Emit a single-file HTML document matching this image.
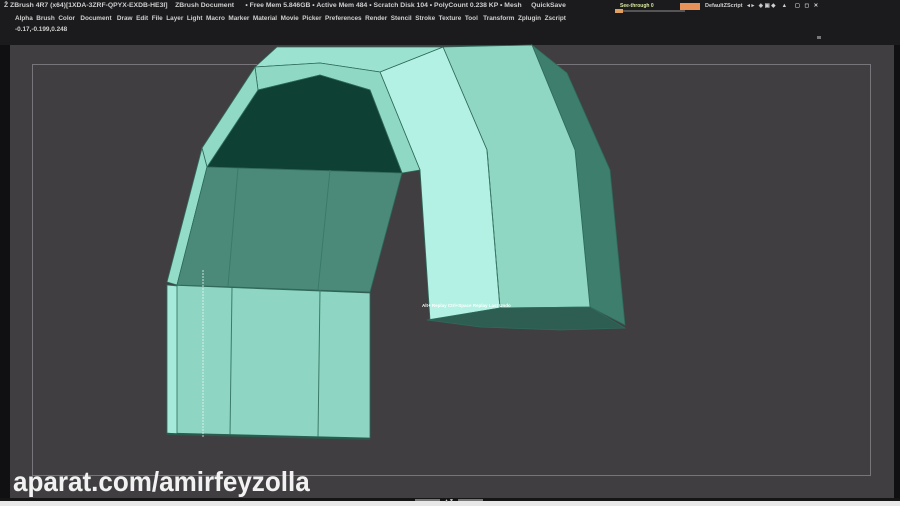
<!DOCTYPE html>
<html><head><meta charset="utf-8"><style>
html,body{margin:0;padding:0;width:900px;height:506px;overflow:hidden;background:#101012;font-family:"Liberation Sans",sans-serif}
.top{position:absolute;left:0;top:0;width:900px;height:45px;background:#1b1b1d}
.t{position:absolute;color:#cfcfcf;font-size:6.4px;white-space:nowrap;font-weight:bold}
.vp{position:absolute;left:10px;top:45px;width:884px;height:454px;background:#403e41}
.wm{position:absolute;left:13px;top:466px;color:#f2f2f2;font-size:28px;font-weight:bold;transform:scaleX(0.93);transform-origin:left}
</style></head><body>
<div class="top">
<div class="t" style="left:4px;top:2px;font-size:6.8px">Ẑ ZBrush 4R7 (x64)[1XDA-3ZRF-QPYX-EXDB-HE3I] &nbsp;&nbsp; ZBrush Document &nbsp;&nbsp;&nbsp;&nbsp; • Free Mem 5.846GB • Active Mem 484 • Scratch Disk 104 • PolyCount 0.238 KP • Mesh &nbsp;&nbsp;&nbsp; QuickSave</div>
<div style="position:absolute;left:620px;top:3px;width:50px;height:6px;color:#d8e8a0;font-size:5px;font-weight:bold">See-through 0</div>
<div style="position:absolute;left:615px;top:10px;width:70px;height:2px;background:#555"></div>
<div style="position:absolute;left:615px;top:9px;width:8px;height:4px;background:#e0a060"></div>
<div style="position:absolute;left:680px;top:3px;width:20px;height:7px;background:#e8925a"></div>
<div class="t" style="left:705px;top:3px;font-size:5.5px">DefaultZScript &nbsp; ◂ ▸ &nbsp; ◈ ▣ ◆ &nbsp;&nbsp; ▲ &nbsp;&nbsp;&nbsp; ▢ &nbsp; ◻ &nbsp; ✕</div>
<div class="t" style="left:15px;top:15px">Alpha &nbsp;Brush &nbsp;Color &nbsp;&nbsp;Document &nbsp;&nbsp;Draw &nbsp;Edit &nbsp;File &nbsp;Layer &nbsp;Light &nbsp;Macro &nbsp;Marker &nbsp;Material &nbsp;Movie &nbsp;Picker &nbsp;Preferences &nbsp;Render &nbsp;Stencil &nbsp;Stroke &nbsp;Texture &nbsp;Tool &nbsp;&nbsp;Transform &nbsp;Zplugin &nbsp;Zscript</div>
<div class="t" style="left:15px;top:26px">-0.17,-0.199,0.248</div>
<div style="position:absolute;left:817px;top:36px;width:4px;height:3px;background:#777"></div>
</div>
<div class="vp"></div>
<svg style="position:absolute;left:0;top:0" width="900" height="506">
<rect x="32.5" y="64.5" width="838" height="411" fill="none" stroke="#77757a" stroke-width="1"/>
<g stroke="#2f6a5a" stroke-width="0.8">
<polygon points="532,45 567,73 610,170 625,325 590,307 575,150" fill="#3e7e6c"/>
<polygon points="443,47 532,45 575,150 590,307 500,308 487,150" fill="#8fd7c3"/>
<polygon points="380,72 443,47 487,150 500,308 430,320 420,170" fill="#b2f1e3"/>
<polygon points="427,320 500,308 590,307 625,328 560,330 480,327" fill="#2d5e51"/>
<polygon points="255,67 277,47 443,47 380,72 320,63" fill="#9be3d0"/>
<polygon points="255,67 320,63 380,72 420,170 402,173 370,90 320,75 258,90" fill="#8fd8c4"/>
<polygon points="207,167 258,90 320,75 370,90 402,173" fill="#0f4034"/>
<polygon points="202,148 255,67 258,90 207,167" fill="#8fd9c5"/>
<polygon points="167,282 202,148 207,167 177,285" fill="#92dcc8"/>
<polygon points="207,167 402,173 370,292 177,285" fill="#4b8a79"/>
<polygon points="167,285 370,293 370,438 167,433" fill="#8ed6c3"/>
<polygon points="167,285 177,286 177,434 167,433" fill="#a6eadb"/>
</g>
<g stroke="#3a7a68" stroke-width="1" fill="none">
<path d="M232,288 L230,436 M320,290 L318,437"/>
<path d="M238,168 L228,286 M330,170 L318,290"/>
<path d="M487,150 L500,308"/>
<path d="M167,434 L370,439" stroke="#2a5a4c" stroke-width="2"/>
</g>
<path d="M203,270 L203,437" stroke="#e8f8f2" stroke-width="0.8" stroke-dasharray="2,1"/>
<text x="422" y="307" font-size="4.5" fill="#fff" font-family="Liberation Sans" font-weight="bold">Alt+ Replay  Ctrl+Space  Replay Last  Undo</text>
<rect x="0" y="500" width="900" height="6" fill="#e8e8e8"/>
<rect x="0" y="498" width="900" height="3" fill="#151515"/>
<rect x="415" y="499" width="25" height="2" fill="#777"/><rect x="458" y="499" width="25" height="2" fill="#777"/>
<text x="444" y="502" font-size="5" fill="#ccc" font-family="Liberation Sans">▲▼</text>
</svg>
<div class="wm">aparat.com/amirfeyzolla</div>
</body></html>
